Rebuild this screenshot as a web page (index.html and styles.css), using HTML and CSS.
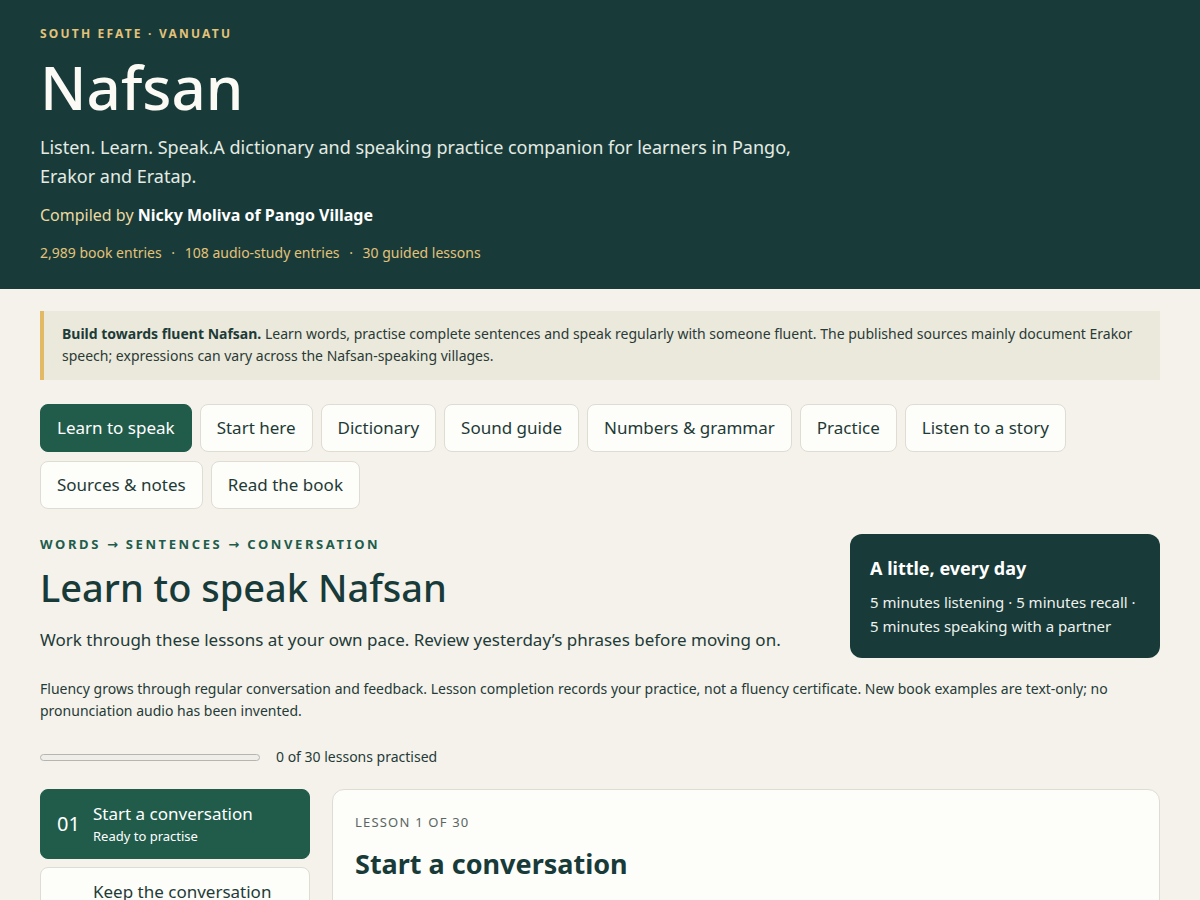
FILE: index.html
```html
<!DOCTYPE html>
<html lang="en">
<head>
<meta charset="utf-8">
<title>Nafsan</title>
<link rel="stylesheet" href="styles.css">
</head>
<body>
<header class="hero">
  <p class="hero-eyebrow">South Efate · Vanuatu</p>
  <h1 class="hero-title">Nafsan</h1>
  <p class="hero-sub">Listen. Learn. Speak.A dictionary and speaking practice companion for learners in Pango, Erakor and Eratap.</p>
  <p class="hero-credit">Compiled by <strong>Nicky Moliva of Pango Village</strong></p>
  <p class="hero-stats">2,989 book entries <span class="sep">·</span> 108 audio-study entries <span class="sep">·</span> 30 guided lessons</p>
</header>
<main class="main">
  <div class="notice"><strong>Build towards fluent Nafsan.</strong> Learn words, practise complete sentences and speak regularly with someone fluent. The published sources mainly document Erakor speech; expressions can vary across the Nafsan-speaking villages.</div>
  <nav class="tabs">
    <a class="tab active">Learn to speak</a>
    <a class="tab">Start here</a>
    <a class="tab">Dictionary</a>
    <a class="tab">Sound guide</a>
    <a class="tab">Numbers &amp; grammar</a>
    <a class="tab">Practice</a>
    <a class="tab">Listen to a story</a>
    <a class="tab">Sources &amp; notes</a>
    <a class="tab">Read the book</a>
  </nav>
  <section class="intro">
    <div class="intro-text">
      <p class="eyebrow">Words <span class="arrow">→</span> Sentences <span class="arrow">→</span> Conversation</p>
      <h2 class="section-title">Learn to speak Nafsan</h2>
      <p class="lead">Work through these lessons at your own pace. Review yesterday’s phrases before moving on.</p>
    </div>
    <aside class="daily">
      <h3 class="daily-title">A little, every day</h3>
      <p class="daily-text">5 minutes listening · 5 minutes recall · 5 minutes speaking with a partner</p>
    </aside>
  </section>
  <p class="note">Fluency grows through regular conversation and feedback. Lesson completion records your practice, not a fluency certificate. New book examples are text-only; no pronunciation audio has been invented.</p>
  <div class="progress-row">
    <div class="progress"><div class="progress-fill" style="width:0%"></div></div>
    <span class="progress-label">0 of 30 lessons practised</span>
  </div>
  <div class="lessons">
    <ol class="lesson-list">
      <li class="lesson-item active">
        <span class="lesson-num">01</span>
        <span class="lesson-info"><span class="lesson-name">Start a conversation</span><span class="lesson-status">Ready to practise</span></span>
      </li>
      <li class="lesson-item">
        <span class="lesson-num">02</span>
        <span class="lesson-info"><span class="lesson-name">Keep the conversation going</span><span class="lesson-status">Ready to practise</span></span>
      </li>
    </ol>
    <article class="lesson-card">
      <p class="lesson-kicker">Lesson 1 of 30</p>
      <h3 class="lesson-title">Start a conversation</h3>
    </article>
  </div>
</main>
</body>
</html>
```
FILE: styles.css
```css
* { box-sizing: border-box; }
html, body { margin: 0; padding: 0; }
body {
  font-family: "Noto Sans", "Open Sans", sans-serif;
  background: #f4f2eb;
  color: #1d3b38;
}
p, h1, h2, h3 { margin: 0; }

.hero {
  background: #183b39;
  color: #ffffff;
  padding: 26px 40px 26px;
}
.hero-eyebrow {
  font-size: 12px;
  line-height: 16px;
  font-weight: 700;
  letter-spacing: 2.2px;
  text-transform: uppercase;
  color: #e3c27a;
}
.hero-title {
  font-size: 60px;
  line-height: 70px;
  font-weight: 500;
  margin-top: 10px;
  color: #fbfaf4;
}
.hero-sub {
  font-size: 18px;
  line-height: 29px;
  max-width: 800px;
  margin-top: 11px;
  color: #e4ebe4;
}
.hero-credit {
  font-size: 16px;
  line-height: 24px;
  margin-top: 12px;
  color: #ecd9a2;
}
.hero-credit strong { color: #ffffff; font-weight: 700; }
.hero-stats {
  font-size: 14px;
  line-height: 20px;
  margin-top: 16px;
  color: #e3c27a;
}
.hero-stats .sep { margin: 0 6px; }

.main { padding: 22px 40px 40px; }

.notice {
  background: #ebe9db;
  border-left: 4px solid #e2b965;
  padding: 12px 22px 13px 18px;
  font-size: 14px;
  line-height: 22px;
  color: #2a3a37;
}
.notice strong { color: #1d3b38; }

.tabs {
  display: flex;
  flex-wrap: wrap;
  gap: 9px 8px;
  margin-top: 24px;
}
.tab {
  display: block;
  padding: 12px 16px;
  font-size: 17px;
  line-height: 22px;
  border: 1px solid #dfdcd2;
  border-radius: 8px;
  background: #fdfdf9;
  color: #1e3a37;
  cursor: pointer;
}
.tab.active {
  background: #215c4b;
  border-color: #215c4b;
  color: #ffffff;
}

.intro {
  display: flex;
  justify-content: space-between;
  align-items: flex-start;
  margin-top: 26px;
  gap: 30px;
}
.eyebrow {
  font-size: 13px;
  line-height: 18px;
  font-weight: 700;
  letter-spacing: 2.6px;
  text-transform: uppercase;
  color: #215c4b;
}
.eyebrow .arrow {
  font-family: "DejaVu Sans", sans-serif;
  font-weight: 700;
  letter-spacing: 0;
  margin-right: 2px;
}
.section-title {
  font-size: 38px;
  line-height: 50px;
  font-weight: 500;
  margin-top: 8px;
  color: #183b39;
}
.lead {
  font-size: 17px;
  line-height: 26px;
  margin-top: 15px;
  color: #233a37;
}
.daily {
  flex: 0 0 310px;
  background: #183b39;
  color: #ffffff;
  border-radius: 12px;
  padding: 21px 20px 20px;
  margin-top: -1px;
}
.daily-title {
  font-size: 18px;
  line-height: 26px;
  font-weight: 700;
}
.daily-text {
  font-size: 15px;
  line-height: 24px;
  margin-top: 9px;
  color: #eef2ee;
}

.note {
  font-size: 14px;
  line-height: 22px;
  margin-top: 20px;
  color: #263a37;
}

.progress-row {
  display: flex;
  align-items: center;
  gap: 16px;
  margin-top: 25px;
}
.progress {
  width: 220px;
  height: 7px;
  border: 1px solid #b5b5b1;
  border-radius: 4px;
  background: #efeee9;
  overflow: hidden;
}
.progress-fill { height: 100%; background: #215c4b; }
.progress-label {
  font-size: 14px;
  line-height: 20px;
  color: #263a37;
}

.lessons {
  display: grid;
  grid-template-columns: 270px 1fr;
  gap: 22px;
  margin-top: 22px;
  align-items: start;
}
.lesson-list {
  list-style: none;
  margin: 0;
  padding: 0;
  display: flex;
  flex-direction: column;
  gap: 8px;
}
.lesson-item {
  display: flex;
  align-items: center;
  gap: 12px;
  padding: 12px 16px;
  border: 1px solid #dfdcd2;
  border-radius: 8px;
  background: #fdfdf9;
  min-height: 70px;
}
.lesson-item.active {
  background: #215c4b;
  border-color: #215c4b;
  color: #ffffff;
}
.lesson-num {
  font-size: 20px;
  line-height: 26px;
  flex: 0 0 24px;
}
.lesson-item:not(.active) .lesson-num { visibility: hidden; }
.lesson-info { display: flex; flex-direction: column; }
.lesson-name { font-size: 17px; line-height: 24px; }
.lesson-status { font-size: 13px; line-height: 20px; }

.lesson-card {
  background: #fdfdf9;
  border: 1px solid #dfdcd2;
  border-radius: 12px;
  padding: 23px 22px 40px;
  min-height: 300px;
}
.lesson-kicker {
  font-size: 13px;
  line-height: 18px;
  letter-spacing: 1.2px;
  text-transform: uppercase;
  color: #5a6663;
}
.lesson-title {
  font-size: 27px;
  line-height: 36px;
  font-weight: 700;
  margin-top: 15px;
  color: #183b39;
}
```
